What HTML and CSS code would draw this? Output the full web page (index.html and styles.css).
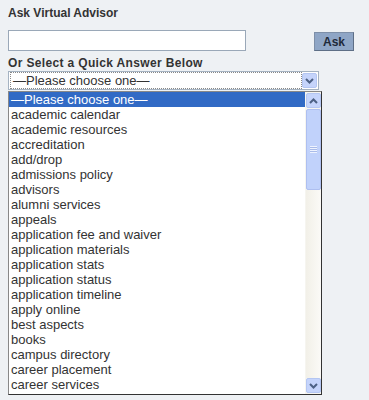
FILE: index.html
```html
<!DOCTYPE html>
<html lang="en">
<head>
  <meta charset="UTF-8">
  <meta name="viewport" content="width=device-width, initial-scale=1.0">
  <title>Ask Virtual Advisor</title>
  <link rel="stylesheet" href="styles.css">
</head>
<body>
  <div class="advisor">
    <h2 class="advisor-title">Ask Virtual Advisor</h2>
    <form class="ask-row">
      <input type="text" class="ask-input" name="question">
      <button type="button" class="ask-button">Ask</button>
    </form>
    <div class="quick-label">Or Select a Quick Answer Below</div>

    <div class="select-box">
      <span class="select-text">&mdash;Please choose one&mdash;</span>
      <span class="arrow-btn">
        <svg width="9" height="6" viewBox="0 0 9 6"><path d="M1 1 L4.5 4.5 L8 1" fill="none" stroke="#4d6185" stroke-width="2"/></svg>
      </span>
    </div>

    <div class="listbox">
      <ul class="options">
        <li class="selected">&mdash;Please choose one&mdash;</li>
        <li>academic calendar</li>
        <li>academic resources</li>
        <li>accreditation</li>
        <li>add/drop</li>
        <li>admissions policy</li>
        <li>advisors</li>
        <li>alumni services</li>
        <li>appeals</li>
        <li>application fee and waiver</li>
        <li>application materials</li>
        <li>application stats</li>
        <li>application status</li>
        <li>application timeline</li>
        <li>apply online</li>
        <li>best aspects</li>
        <li>books</li>
        <li>campus directory</li>
        <li>career placement</li>
        <li>career services</li>
      </ul>
      <div class="scrollbar">
        <span class="scroll-btn">
          <svg width="9" height="6" viewBox="0 0 9 6"><path d="M1 5 L4.5 1.5 L8 5" fill="none" stroke="#4d6185" stroke-width="2"/></svg>
        </span>
        <div class="scroll-thumb">
          <span class="grip"></span>
        </div>
        <div class="scroll-track"></div>
        <span class="scroll-btn">
          <svg width="9" height="6" viewBox="0 0 9 6"><path d="M1 1 L4.5 4.5 L8 1" fill="none" stroke="#4d6185" stroke-width="2"/></svg>
        </span>
      </div>
    </div>
  </div>
</body>
</html>
```

FILE: styles.css
```css
body {
  margin: 0;
  padding: 6px 8px 0;
  background-color: #eef1f4;
  font-family: "Liberation Sans", Arial, sans-serif;
  color: #333;
}

.advisor-title {
  margin: 0;
  font-size: 12px;
  line-height: 14px;
  font-weight: bold;
  color: #333;
}

.ask-row {
  display: flex;
  justify-content: space-between;
  align-items: flex-start;
  margin: 10px 7px 0 0;
}

.ask-input {
  width: 238px;
  height: 21px;
  box-sizing: border-box;
  margin: 0;
  border: 1px solid #9aa8b8;
  background-color: white;
}

.ask-button {
  margin-top: 2px;
  width: 40px;
  height: 19px;
  padding: 0;
  background-color: #8fa6c6;
  border: 1px solid #7d8fa8;
  border-right-color: #5e6f86;
  border-bottom-color: #5e6f86;
  font-family: "Liberation Sans", Arial, sans-serif;
  font-size: 12px;
  font-weight: bold;
  color: #1f2a3a;
}

.quick-label {
  margin-top: 5px;
  font-size: 12px;
  line-height: 14px;
  font-weight: bold;
  letter-spacing: 0.35px;
  color: #333;
}

.select-box {
  display: flex;
  align-items: center;
  justify-content: space-between;
  width: 311px;
  height: 19px;
  box-sizing: border-box;
  margin-top: 1px;
  border: 1px solid #a5b3c2;
  background-color: white;
  padding: 1px;
}

.select-text {
  flex: 1;
  height: 15px;
  line-height: 15px;
  padding-left: 2px;
  font-size: 13px;
  color: #333;
  border: 1px dotted #888;
}

.arrow-btn,
.scroll-btn {
  display: flex;
  align-items: center;
  justify-content: center;
  width: 15px;
  height: 15px;
  box-sizing: border-box;
  background-color: #c5d4fb;
  border: 1px solid #b4c6f2;
  border-radius: 2px;
  flex-shrink: 0;
}

.listbox {
  display: flex;
  width: 314px;
  height: 304px;
  box-sizing: border-box;
  margin-top: 1px;
  border: 1px solid #888;
  border-right-color: #333;
  border-bottom-color: #333;
  background-color: white;
}

.options {
  flex: 1;
  margin: 0;
  padding: 0;
  list-style: none;
}

.options li {
  height: 15px;
  line-height: 15px;
  padding-left: 2px;
  font-size: 13px;
  color: #333;
  white-space: nowrap;
}

.options li.selected {
  background-color: #316ac5;
  color: white;
}

.scrollbar {
  display: flex;
  flex-direction: column;
  width: 16px;
  padding: 1px 0 1px 1px;
  box-sizing: border-box;
  background-color: #f6f5f0;
}

.scroll-thumb {
  display: flex;
  align-items: center;
  justify-content: center;
  height: 79px;
  margin-top: 1px;
  background-color: #c1d2fb;
  border: 1px solid #aebff0;
  border-radius: 2px;
}

.grip {
  width: 7px;
  height: 7px;
  background: repeating-linear-gradient(#eef3ff 0 1px, #a9bbe9 1px 2px);
}

.scroll-track {
  flex: 1;
  background: linear-gradient(to right, #f2f0e8, #fbfaf7);
}
```
